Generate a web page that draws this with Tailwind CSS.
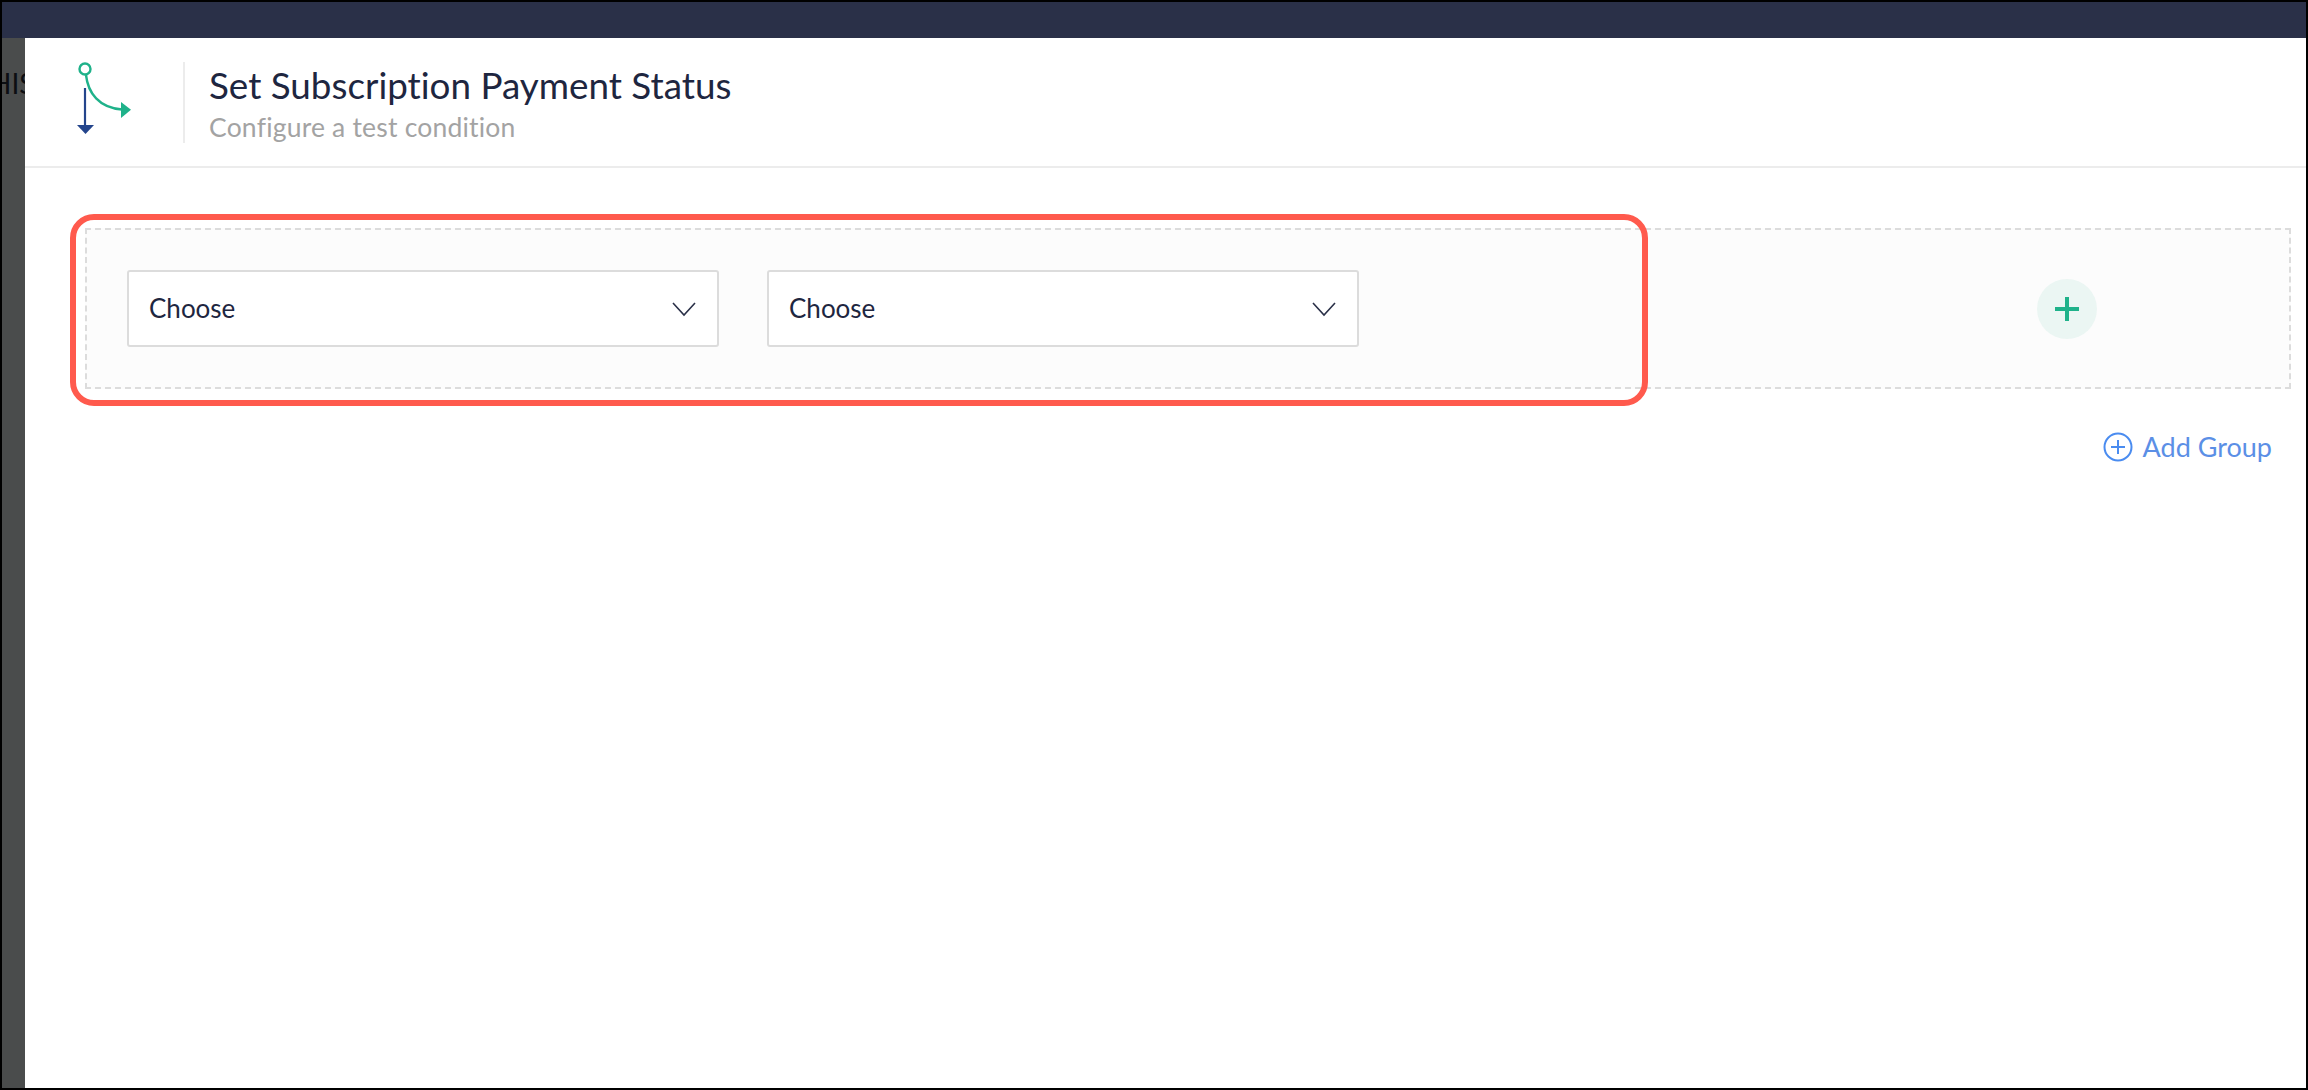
<!DOCTYPE html>
<html lang="en">
<head>
    <meta charset="UTF-8">
    <title>Set Subscription Payment Status</title>
    <script src="https://cdn.jsdelivr.net/npm/@tailwindcss/browser@4"></script>
</head>
<body class="bg-black overflow-hidden font-['Lato','Liberation_Sans',sans-serif] [font-variant-ligatures:none]">
    <div class="w-[2308px] h-[1090px] p-[2px]">
        <div class="w-full h-full flex flex-col bg-[#4a4c4c]">
            <!-- top bar -->
            <div class="h-[36px] shrink-0 bg-[#2a3048]"></div>

            <div class="flex-1 flex min-h-0">
                <!-- page behind the panel -->
                <div class="w-[23px] shrink-0 overflow-hidden pt-[30px]">
                    <div class="text-[28px] leading-[30px] text-[#0c0e12] -ml-[12px] whitespace-nowrap">HISTORY</div>
                </div>

                <!-- panel -->
                <div class="flex-1 bg-white flex flex-col">
                    <header class="h-[130px] shrink-0 border-b-2 border-[#ececec] flex items-center pl-[43px]">
                        <div class="w-[117px] h-[81px] border-r-2 border-[#ececec] shrink-0 mt-[1px]">
                            <svg width="66" height="80" viewBox="0 0 66 80" fill="none">
                                <circle cx="17" cy="7" r="5.500" stroke="#1fb28a" stroke-width="2.400" fill="white"/>
                                <path d="M18 13c2 18 13 33 36 34.500" stroke="#1fb28a" stroke-width="2.400"/>
                                <path d="M53 40 L63 47.700 L53 56 Z" fill="#1fb28a"/>
                                <path d="M17 26 V64" stroke="#24458c" stroke-width="2.200"/>
                                <path d="M9 63 H26 L17.500 72 Z" fill="#24458c"/>
                            </svg>
                        </div>
                        <div class="pl-[24px] mt-[3px]">
                            <h1 class="text-[36.800px] leading-[44px] text-[#1e2640] font-normal">Set Subscription Payment Status</h1>
                            <p class="text-[26.500px] leading-[34px] mt-[3px] text-[#a3a3a3] tracking-[0.2px]">Configure a test condition</p>
                        </div>
                    </header>

                    <div class="relative flex-1 pt-[60px] pl-[60px] pr-[15px]">
                        <!-- condition group -->
                        <div class="h-[161px] border-2 border-dashed border-[#dcdcdc] bg-[#fcfcfc] flex items-center pl-[40px]">
                            <div class="w-[592px] h-[77px] border-2 border-[#dcdcdc] rounded-[3px] bg-white flex items-center justify-between pl-[20px] pr-[20px] text-[26px] text-[#1e2640]">
                                <span>Choose</span>
                                <svg width="26" height="16" viewBox="0 0 26 16" fill="none"><path d="M2 2 L13 14 L24 2" stroke="#2a3048" stroke-width="1.600"/></svg>
                            </div>
                            <div class="w-[592px] h-[77px] ml-[48px] border-2 border-[#dcdcdc] rounded-[3px] bg-white flex items-center justify-between pl-[20px] pr-[20px] text-[26px] text-[#1e2640]">
                                <span>Choose</span>
                                <svg width="26" height="16" viewBox="0 0 26 16" fill="none"><path d="M2 2 L13 14 L24 2" stroke="#2a3048" stroke-width="1.600"/></svg>
                            </div>
                            <div class="w-[60px] h-[60px] ml-[678px] rounded-full bg-[#ebf6f3] flex items-center justify-center">
                                <svg width="24" height="24" viewBox="0 0 24 24"><path d="M12 0 V24 M0 12 H24" stroke="#1fb28a" stroke-width="4"/></svg>
                            </div>
                        </div>

                        <div class="flex justify-end items-center gap-[10px] mt-[41px] pr-[19px] text-[27px] leading-[34px] text-[#5b8fe6]">
                            <svg width="30" height="30" viewBox="0 0 30 30" fill="none" stroke="#4a8cf0" stroke-width="2"><circle cx="15" cy="15" r="13.500"/><path d="M15 8 V22 M8 15 H22"/></svg>
                            <span>Add Group</span>
                        </div>

                        <!-- red highlight -->
                        <div class="absolute left-[45px] top-[46px] w-[1578px] h-[192px] border-[6px] border-[#ff5a4d] rounded-[24px] pointer-events-none"></div>
                    </div>
                </div>
            </div>
        </div>
    </div>
</body>
</html>
